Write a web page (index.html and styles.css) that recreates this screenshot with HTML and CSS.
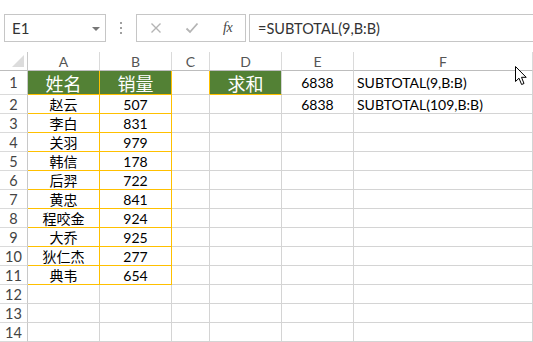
FILE: index.html
```html
<!DOCTYPE html>
<html>
<head>
<meta charset="utf-8">
<link rel="stylesheet" href="styles.css">
</head>
<body>
<div class="app">
  <div class="toolbar">
    <div class="namebox">
      <span class="name">E1</span>
      <span class="caret"></span>
    </div>
    <div class="dots"><i></i><i></i><i></i></div>
    <div class="iconbox">
      <svg class="ic" width="12" height="12" viewBox="0 0 12 12"><path d="M1.5 1.5L10.5 10.5M10.5 1.5L1.5 10.5" stroke="#b4b4b4" stroke-width="1.4" fill="none"/></svg>
      <svg class="ic" width="14" height="12" viewBox="0 0 14 12"><path d="M1.5 6.5L5 10L12.5 1.5" stroke="#b4b4b4" stroke-width="1.8" fill="none"/></svg>
      <span class="fx">fx</span>
    </div>
    <div class="formula">=SUBTOTAL(9,B:B)</div>
  </div>
  <div class="sheet">
    <div class="c corner"><span class="tri"></span></div>
    <div class="c ch">A</div><div class="c ch">B</div><div class="c ch">C</div><div class="c ch">D</div><div class="c ch">E</div><div class="c ch">F</div>

    <div class="c rh">1</div>
    <div class="c hd o">姓名</div><div class="c hd o">销量</div><div class="c oR"></div><div class="c hd oB">求和</div><div class="c num">6838</div><div class="c txt">SUBTOTAL(9,B:B)</div>

    <div class="c rh">2</div><div class="c cn o">赵云</div><div class="c num o">507</div><div class="c"></div><div class="c"></div><div class="c num">6838</div><div class="c txt">SUBTOTAL(109,B:B)</div>
    <div class="c rh">3</div><div class="c cn o">李白</div><div class="c num o">831</div><div class="c"></div><div class="c"></div><div class="c"></div><div class="c"></div>
    <div class="c rh">4</div><div class="c cn o">关羽</div><div class="c num o">979</div><div class="c"></div><div class="c"></div><div class="c"></div><div class="c"></div>
    <div class="c rh">5</div><div class="c cn o">韩信</div><div class="c num o">178</div><div class="c"></div><div class="c"></div><div class="c"></div><div class="c"></div>
    <div class="c rh">6</div><div class="c cn o">后羿</div><div class="c num o">722</div><div class="c"></div><div class="c"></div><div class="c"></div><div class="c"></div>
    <div class="c rh">7</div><div class="c cn o">黄忠</div><div class="c num o">841</div><div class="c"></div><div class="c"></div><div class="c"></div><div class="c"></div>
    <div class="c rh">8</div><div class="c cn o">程咬金</div><div class="c num o">924</div><div class="c"></div><div class="c"></div><div class="c"></div><div class="c"></div>
    <div class="c rh">9</div><div class="c cn o">大乔</div><div class="c num o">925</div><div class="c"></div><div class="c"></div><div class="c"></div><div class="c"></div>
    <div class="c rh">10</div><div class="c cn o">狄仁杰</div><div class="c num o">277</div><div class="c"></div><div class="c"></div><div class="c"></div><div class="c"></div>
    <div class="c rh">11</div><div class="c cn o">典韦</div><div class="c num o">654</div><div class="c"></div><div class="c"></div><div class="c"></div><div class="c"></div>
    <div class="c rh">12</div><div class="c"></div><div class="c"></div><div class="c"></div><div class="c"></div><div class="c"></div><div class="c"></div>
    <div class="c rh">13</div><div class="c"></div><div class="c"></div><div class="c"></div><div class="c"></div><div class="c"></div><div class="c"></div>
    <div class="c rh">14</div><div class="c"></div><div class="c"></div><div class="c"></div><div class="c"></div><div class="c"></div><div class="c"></div>
  </div>
  <svg class="cursor" width="12" height="20" viewBox="0 0 12 20"><path d="M0.5 0.5L0.5 15.5L4 12.2L6.6 18.5L9 17.5L6.5 11.3L11.2 11.3Z" fill="#fff" stroke="#000" stroke-width="1"/></svg>
</div>
</body>
</html>
```
FILE: styles.css
```css
* { box-sizing: border-box; }
html, body { margin: 0; padding: 0; background: #fff; }
body { font-family: Lato, "Noto Sans CJK SC", sans-serif; color: #000; width: 533px; height: 342px; overflow: hidden; }
.app { position: relative; width: 533px; height: 342px; }

.toolbar { height: 52px; display: flex; align-items: flex-start; padding-top: 14px; padding-left: 4px; }
.namebox { width: 102px; height: 28px; border: 1px solid #c6c6c6; display: flex; align-items: center; justify-content: space-between; padding: 0 5px 0 7px; }
.name { font-size: 15px; color: #333; }
.caret { width: 0; height: 0; border-left: 4px solid transparent; border-right: 4px solid transparent; border-top: 4px solid #777; margin-top: 1px; }
.dots { width: 30px; height: 28px; display: flex; flex-direction: column; align-items: center; justify-content: center; gap: 3px; }
.dots i { display: block; width: 2px; height: 2px; background: #a0a0a0; }
.iconbox { width: 110px; height: 28px; border: 1px solid #c6c6c6; display: flex; align-items: center; padding-left: 13px; }
.iconbox .ic:first-child { margin-right: 23px; }
.iconbox .ic:nth-child(2) { margin-right: 24px; }
.fx { font-family: "Liberation Serif", serif; font-style: italic; font-size: 14px; color: #444; letter-spacing: -0.5px; }
.formula { flex: 1; margin-left: 3px; height: 28px; border-top: 1px solid #c6c6c6; border-bottom: 1px solid #c6c6c6; border-left: 1px solid #c6c6c6; font-size: 14.5px; color: #333; display: flex; align-items: center; padding-left: 8px; white-space: nowrap; }

.sheet { display: grid; grid-template-columns: 28px 72px 72px 38px 72px 72px 1fr; grid-template-rows: 19px 24px repeat(13, 19px); }
.c { border-right: 1px solid #d4d4d4; border-bottom: 1px solid #d4d4d4; display: flex; align-items: center; justify-content: center; font-size: 14px; white-space: nowrap; overflow: hidden; }
.corner { border-right: 1px solid #c8c8c8; border-bottom: 1px solid #bdbdbd; position: relative; }
.tri { position: absolute; right: 3px; bottom: 3px; width: 0; height: 0; border-left: 12px solid transparent; border-bottom: 12px solid #dcdcdc; }
.ch { color: #555; border-bottom-color: #bdbdbd; border-right-color: #dadada; font-size: 14px; padding-top: 1px; }
.rh { color: #444; border-right-color: #c8c8c8; border-bottom-color: #dadada; font-size: 14.5px; }
.hd { background: #538135; color: #fff; font-size: 18px; }
.cn { font-size: 14px; }
.num { font-size: 14px; }
.txt { justify-content: flex-start; padding-left: 3px; }
.o { border-right-color: #ffc000; border-bottom-color: #ffc000; }
.oR { border-right-color: #ffc000; }
.oB { border-bottom-color: #ffc000; }

.cursor { position: absolute; left: 515px; top: 66px; }
```
